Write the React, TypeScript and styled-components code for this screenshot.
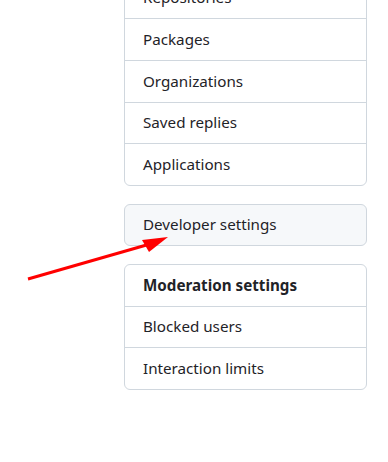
import React from "react";
import styled, { createGlobalStyle } from "styled-components";

const GlobalStyle = createGlobalStyle`
  html, body {
    margin: 0;
    padding: 0;
    background: #ffffff;
    overflow: hidden;
  }
  body {
    font-family: "Noto Sans", "Open Sans", sans-serif;
    font-size: 15.2px;
    color: #1f2328;
  }
`;

const Page = styled.div`
  position: relative;
  width: 388px;
  height: 462px;
  overflow: hidden;
`;

const Sidebar = styled.nav`
  display: flex;
  flex-direction: column;
  gap: 17.5px;
  width: 243px;
  margin-left: 124px;
  margin-top: -23.75px;
`;

const Card = styled.div<{ $muted?: boolean }>`
  display: flex;
  flex-direction: column;
  border: 1px solid #d0d7de;
  border-radius: 6px;
  background: ${(p) => (p.$muted ? "#f6f8fa" : "#ffffff")};
  overflow: hidden;
`;

const Item = styled.div<{ $heading?: boolean }>`
  display: flex;
  align-items: center;
  height: 40.75px;
  padding: 0 18px;
  font-size: 15.2px;
  line-height: 20px;
  font-weight: ${(p) => (p.$heading ? 700 : 400)};
  color: #1f2328;
  white-space: nowrap;
  padding-bottom: 1px;
  box-sizing: border-box;
  & + & {
    border-top: 1px solid #d0d7de;
    height: 41.75px;
  }
`;

const ArrowLayer = styled.svg`
  position: absolute;
  left: 0;
  top: 0;
  pointer-events: none;
`;

const accountItems = [
  "Repositories",
  "Packages",
  "Organizations",
  "Saved replies",
  "Applications",
];

const moderationItems = ["Blocked users", "Interaction limits"];

export default function App() {
  return (
    <Page>
      <GlobalStyle />
      <Sidebar>
        <Card>
          {accountItems.map((label) => (
            <Item key={label}>{label}</Item>
          ))}
        </Card>
        <Card $muted>
          <Item>Developer settings</Item>
        </Card>
        <Card>
          <Item $heading>Moderation settings</Item>
          {moderationItems.map((label) => (
            <Item key={label}>{label}</Item>
          ))}
        </Card>
      </Sidebar>
      <ArrowLayer width="388" height="462" viewBox="0 0 388 462">
        <line
          x1="28"
          y1="279"
          x2="150"
          y2="244"
          stroke="#ff0000"
          strokeWidth="3"
        />
        <polygon points="168,237 142,240 149,252" fill="#ff0000" />
      </ArrowLayer>
    </Page>
  );
}
